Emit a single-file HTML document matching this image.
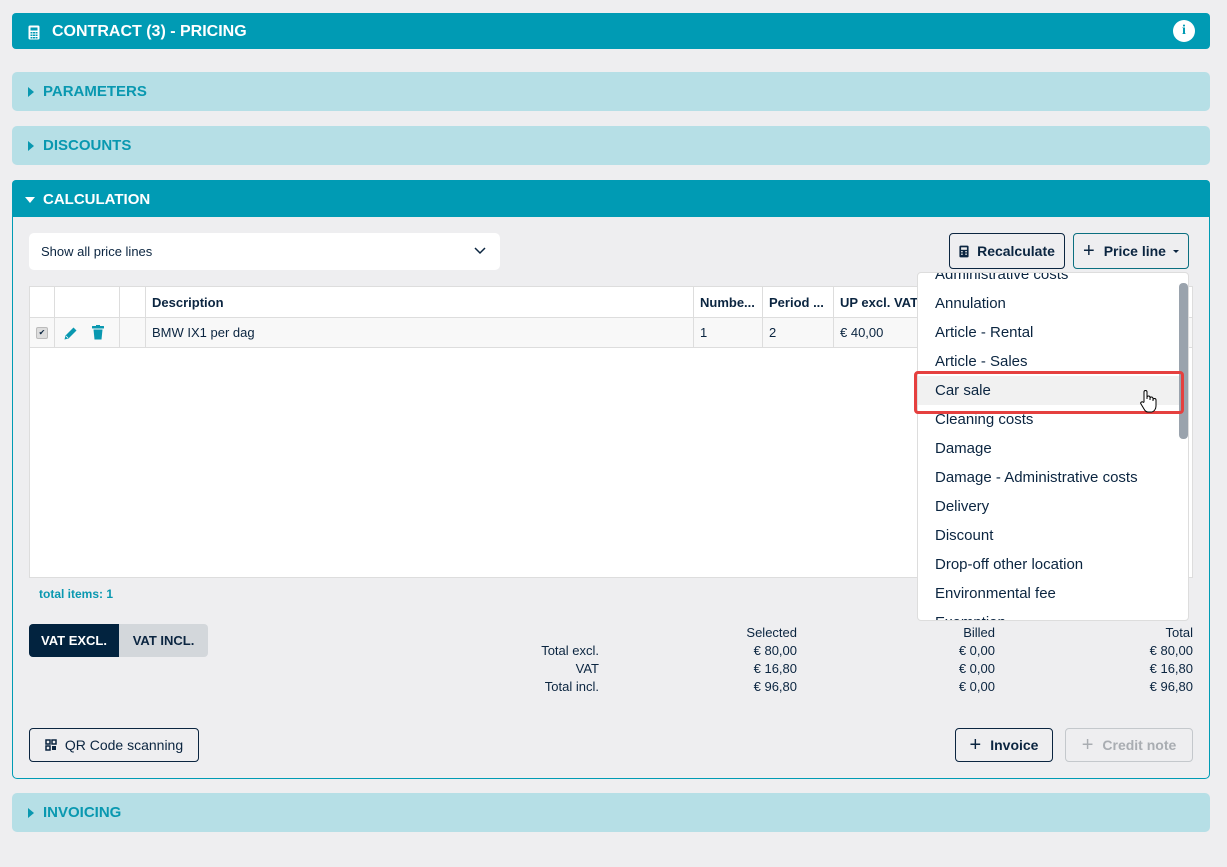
<!DOCTYPE html>
<html><head><meta charset="utf-8"><style>
*{box-sizing:border-box;margin:0;padding:0}
body{width:1227px;height:867px;background:#eeeef0;font-family:"Liberation Sans",sans-serif;color:#0b2540;position:relative;overflow:hidden;font-size:14px}
.abs{position:absolute}
.hdr{background:#009bb4;color:#fff;font-weight:bold;font-size:16px;border-radius:4px 4px 0 0;display:flex;align-items:center}
.lt{background:#b6dfe6;color:#0998b0;font-weight:bold;font-size:15px;border-radius:5px;display:flex;align-items:center;padding-left:16px}
.tri{width:0;height:0;border-top:5px solid transparent;border-bottom:5px solid transparent;border-left:6px solid #0998b0;margin-right:9px}
.btn{border:1px solid #0b2540;border-radius:4px;display:flex;align-items:center;justify-content:center;font-weight:bold;font-size:14px;background:#eeeef0}
.cell{position:absolute;top:0;height:100%;border-right:1px solid #ddd;display:flex;align-items:center;padding-left:6px;font-size:13px}
.dd div{height:29px;line-height:29px;padding-left:17px;font-size:15px}
.r{position:absolute;text-align:right;font-size:13px;width:200px}
</style></head><body>
<div class="abs hdr" style="left:12px;top:13px;width:1198px;height:36px;border-radius:4px;padding-left:16px;padding-top:2px">
<svg width="12" height="15" viewBox="0 0 12 15" style="margin-right:12px"><rect x="0.5" y="0.5" width="11" height="14" rx="1.5" fill="#fff"/><rect x="2.5" y="2.5" width="7" height="3" fill="#009bb4"/><g fill="#009bb4"><rect x="2.5" y="7" width="2" height="1.5"/><rect x="5" y="7" width="2" height="1.5"/><rect x="7.5" y="7" width="2" height="1.5"/><rect x="2.5" y="9.5" width="2" height="1.5"/><rect x="5" y="9.5" width="2" height="1.5"/><rect x="7.5" y="9.5" width="2" height="1.5"/><rect x="2.5" y="12" width="2" height="1.5"/><rect x="5" y="12" width="2" height="1.5"/><rect x="7.5" y="12" width="2" height="1.5"/></g></svg>
CONTRACT (3) - PRICING
<div style="position:absolute;right:15px;top:7px;width:22px;height:22px;border-radius:50%;background:#fff;color:#009bb4;font-size:14px;font-weight:bold;text-align:center;line-height:22px;font-family:'Liberation Serif',serif">i</div></div>
<div class="abs lt" style="left:12px;top:72px;width:1198px;height:39px"><span class="tri"></span>PARAMETERS</div>
<div class="abs lt" style="left:12px;top:126px;width:1198px;height:39px"><span class="tri"></span>DISCOUNTS</div>
<div class="abs" style="left:12px;top:180px;width:1198px;height:599px;border:1px solid #009bb4;border-radius:5px"></div>
<div class="abs hdr" style="left:12px;top:180px;width:1198px;height:37px;padding-left:13px;font-size:15px;padding-top:2px"><span style="width:0;height:0;border-left:5px solid transparent;border-right:5px solid transparent;border-top:6px solid #fff;margin-right:8px"></span>CALCULATION</div>
<div class="abs" style="left:29px;top:233px;width:471px;height:37px;background:#fff;border-radius:5px;padding-left:12px;line-height:37px;font-size:13px">Show all price lines
<svg class="abs" style="right:14px;top:14px" width="12" height="8" viewBox="0 0 12 8"><path d="M1 1l5 5 5-5" stroke="#0b2540" stroke-width="1.5" fill="none"/></svg></div>
<div class="abs btn" style="left:949px;top:233px;width:116px;height:36px"><svg width="10" height="13" viewBox="0 0 12 15" style="margin-right:8px"><rect x="0.5" y="0.5" width="11" height="14" rx="1.5" fill="#0b2540"/><rect x="2.5" y="2.5" width="7" height="3" fill="#eee"/><g fill="#eee"><rect x="2.5" y="7" width="2" height="1.5"/><rect x="7.5" y="7" width="2" height="1.5"/><rect x="2.5" y="10" width="2" height="1.5"/><rect x="7.5" y="10" width="2" height="1.5"/></g></svg>Recalculate</div>
<div class="abs btn" style="left:1073px;top:233px;width:116px;height:36px;border-color:#0b6f80"><span style="font-size:20px;font-weight:normal;margin-right:9px">+</span>Price line<span style="margin-left:7px;border-left:3px solid transparent;border-right:3px solid transparent;border-top:3px solid #0b2540"></span></div>
<div class="abs" style="left:29px;top:286px;width:1164px;height:292px;background:#fff;border:1px solid #ddd">
<div class="abs" style="left:0;top:0;width:100%;height:31px;border-bottom:1px solid #ddd;font-weight:bold">
<div class="cell" style="left:0;width:25px"></div><div class="cell" style="left:25px;width:65px"></div><div class="cell" style="left:90px;width:26px"></div>
<div class="cell" style="left:116px;width:548px">Description</div><div class="cell" style="left:664px;width:69px">Numbe...</div><div class="cell" style="left:733px;width:71px">Period ...</div><div class="cell" style="left:804px;width:100px;border:none">UP excl. VAT.</div></div>
<div class="abs" style="left:0;top:31px;width:100%;height:30px;border-bottom:1px solid #ddd;background:#f8f8f8">
<div class="cell" style="left:0;width:25px"><span style="width:12px;height:12px;background:#ddd;border:1px solid #bbb;border-radius:2px;font-size:8px;line-height:10px;text-align:center">✔</span></div>
<div class="cell" style="left:25px;width:65px;padding-left:8px"><svg width="16" height="16" viewBox="0 0 16 16"><path d="M1.5 14.5l1-4 8-8 3 3-8 8z" fill="#0998b0"/><path d="M3 11l2 2" stroke="#fff" stroke-width="0.8"/></svg><svg width="12" height="15" viewBox="0 0 12 15" style="margin-left:13px"><rect x="0" y="1" width="12" height="2.5" rx="0.5" fill="#0998b0"/><rect x="4" y="0" width="4" height="2" fill="#0998b0"/><path d="M1.5 4.5h9l-1 10h-7z" fill="#0998b0"/></svg></div>
<div class="cell" style="left:90px;width:26px"></div>
<div class="cell" style="left:116px;width:548px">BMW IX1 per dag</div><div class="cell" style="left:664px;width:69px">1</div><div class="cell" style="left:733px;width:71px">2</div><div class="cell" style="left:804px;width:100px;border:none">€ 40,00</div></div>
</div>
<div class="abs" style="left:39px;top:587px;color:#0998b0;font-weight:bold;font-size:12px">total items: 1</div>
<div class="abs" style="left:29px;top:624px;width:179px;height:33px;border-radius:4px;background:#d3d7db;overflow:hidden;font-weight:bold;font-size:13px">
<div class="abs" style="left:0;top:0;width:90px;height:33px;background:#02233f;color:#fff;line-height:33px;text-align:center">VAT EXCL.</div>
<div class="abs" style="left:90px;top:0;width:89px;height:33px;line-height:33px;text-align:center">VAT INCL.</div></div>
<div class="r" style="left:599px;top:625px;width:198px">Selected</div><div class="r" style="left:797px;top:625px;width:198px">Billed</div><div class="r" style="left:995px;top:625px;width:198px">Total</div>
<div class="r" style="left:399px;top:643px">Total excl.</div><div class="r" style="left:597px;top:643px">€ 80,00</div><div class="r" style="left:795px;top:643px">€ 0,00</div><div class="r" style="left:993px;top:643px">€ 80,00</div>
<div class="r" style="left:399px;top:661px">VAT</div><div class="r" style="left:597px;top:661px">€ 16,80</div><div class="r" style="left:795px;top:661px">€ 0,00</div><div class="r" style="left:993px;top:661px">€ 16,80</div>
<div class="r" style="left:399px;top:679px">Total incl.</div><div class="r" style="left:597px;top:679px">€ 96,80</div><div class="r" style="left:795px;top:679px">€ 0,00</div><div class="r" style="left:993px;top:679px">€ 96,80</div>
<div class="abs btn" style="left:29px;top:728px;width:170px;height:34px;font-weight:normal"><svg width="12" height="12" viewBox="0 0 12 12" style="margin-right:8px"><g fill="none" stroke="#0b2540" stroke-width="1.5"><rect x="1" y="1" width="4" height="4"/><rect x="7" y="1" width="4" height="4"/><rect x="1" y="7" width="4" height="4"/></g><rect x="7" y="7" width="4" height="4" fill="#0b2540"/></svg>QR Code scanning</div>
<div class="abs btn" style="left:955px;top:728px;width:98px;height:34px"><span style="font-size:20px;font-weight:normal;margin-right:9px">+</span>Invoice</div>
<div class="abs btn" style="left:1065px;top:728px;width:128px;height:34px;border-color:#c4c8cc;color:#a9adb2"><span style="font-size:20px;font-weight:normal;margin-right:9px">+</span>Credit note</div>
<div class="abs lt" style="left:12px;top:793px;width:1198px;height:39px"><span class="tri"></span>INVOICING</div>
<div class="abs dd" style="left:917px;top:272px;width:272px;height:349px;background:#fff;border:1px solid #ddd;border-radius:4px;overflow:hidden">
<div style="margin-top:-13px">Administrative costs</div><div>Annulation</div><div>Article - Rental</div><div>Article - Sales</div><div style="background:#f1f1f1">Car sale</div><div>Cleaning costs</div><div>Damage</div><div>Damage - Administrative costs</div><div>Delivery</div><div>Discount</div><div>Drop-off other location</div><div>Environmental fee</div><div>Exemption</div>
<div class="abs" style="left:261px;top:10px;width:9px;height:156px;background:#9aa3ad;border-radius:4px;padding:0"></div></div>
<div class="abs" style="left:914px;top:371px;width:270px;height:43px;border:3px solid #e5403f;border-radius:4px"></div>
<svg class="abs" style="left:1139px;top:389px" width="18" height="24" viewBox="0 0 18 24"><path d="M5 13V3a1.5 1.5 0 0 1 3 0v7V8.5a1.5 1.5 0 0 1 3 0V11 9.5a1.5 1.5 0 0 1 3 0V12 11a1.5 1.5 0 0 1 3 0v6c0 3-2 6-5 6H9c-2 0-3-1-4-3l-3-5a1.4 1.4 0 0 1 2.3-1.6z" fill="#fff" stroke="#000" stroke-width="1"/></svg>
</body></html>
